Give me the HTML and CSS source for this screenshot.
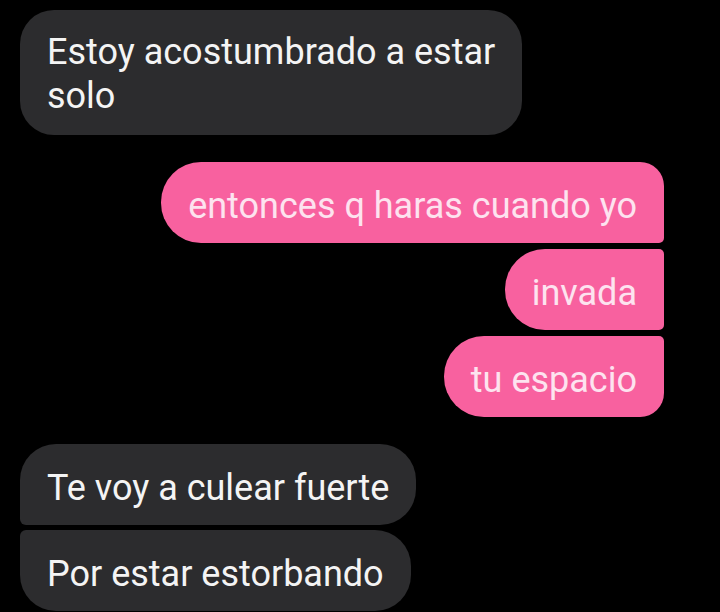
FILE: index.html
```html
<!DOCTYPE html>
<html lang="es">
<head>
<meta charset="utf-8">
<link rel="stylesheet" href="styles.css">
</head>
<body>
<div class="chat">
  <div class="group in first">
    <div class="bubble gray b1">Estoy acostumbrado a estar<br>solo</div>
  </div>
  <div class="group out">
    <div class="bubble pink p1">entonces q haras cuando yo</div>
    <div class="bubble pink p2">invada</div>
    <div class="bubble pink p3">tu espacio</div>
  </div>
  <div class="group in">
    <div class="bubble gray g2">Te voy a culear fuerte</div>
    <div class="bubble gray g3">Por estar estorbando</div>
  </div>
</div>
</body>
</html>
```

FILE: styles.css
```css
html, body {
  margin: 0;
  padding: 0;
  background: #000;
  width: 720px;
  height: 612px;
  overflow: hidden;
}
.chat {
  display: flex;
  flex-direction: column;
  gap: 27px;
  padding: 10px 56px 0 20px;
  font-family: Roboto, "Noto Sans", sans-serif;
  font-size: 36px;
}
.group {
  display: flex;
  flex-direction: column;
  gap: 5px;
}
.group.out { align-items: flex-end; gap: 6px; }
.group.in { align-items: flex-start; }
.bubble {
  box-sizing: border-box;
  padding: 8px 27px 0;
  height: 81px;
  line-height: 73px;
  white-space: nowrap;
}
.gray {
  background: #2c2c2e;
  color: #f4f4f4;
}
.pink {
  background: #f8619f;
  color: #fde3ef;
}
.b1 {
  height: 125px;
  line-height: 44px;
  padding-top: 20px;
  border-radius: 34px;
}
.p1 { border-radius: 40px 24px 5px 40px; }
.p2 { border-radius: 40px 5px 5px 40px; }
.p3 { border-radius: 40px 5px 24px 40px; }
.g2 { border-radius: 36px 36px 36px 6px; }
.g3 { border-radius: 6px 36px 36px 36px; }
```
